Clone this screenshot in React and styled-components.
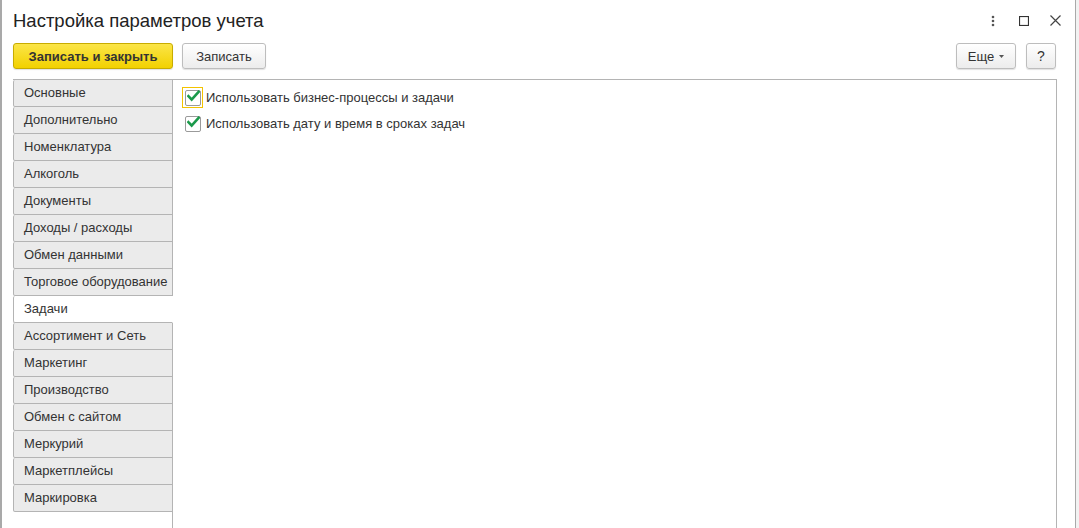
import React, { useState } from "react";
import styled, { createGlobalStyle } from "styled-components";

const GlobalStyle = createGlobalStyle`
  html, body {
    margin: 0;
    padding: 0;
    background: #fff;
  }
  body {
    font-family: Arial, "Liberation Sans", sans-serif;
    color: #333;
  }
`;

const tabs = [
  "Основные",
  "Дополнительно",
  "Номенклатура",
  "Алкоголь",
  "Документы",
  "Доходы / расходы",
  "Обмен данными",
  "Торговое оборудование",
  "Задачи",
  "Ассортимент и Сеть",
  "Маркетинг",
  "Производство",
  "Обмен с сайтом",
  "Меркурий",
  "Маркетплейсы",
  "Маркировка",
];

const App = () => {
  const [active, setActive] = useState("Задачи");
  const [options, setOptions] = useState({ tasks: true, dates: true });

  const toggle = (key) => setOptions((o) => ({ ...o, [key]: !o[key] }));

  return (
    <>
      <GlobalStyle />
      <Screen>
        <Window>
          <Header>
            <Title>Настройка параметров учета</Title>
            <WindowControls>
              <ControlIcon>
                <svg width="4" height="12" viewBox="0 0 4 12">
                  <circle cx="2" cy="2" r="1.3" fill="#555" />
                  <circle cx="2" cy="6" r="1.3" fill="#555" />
                  <circle cx="2" cy="10" r="1.3" fill="#555" />
                </svg>
              </ControlIcon>
              <ControlIcon>
                <svg width="10" height="10" viewBox="0 0 10 10">
                  <rect x="0.5" y="0.5" width="9" height="9" fill="none" stroke="#333" strokeWidth="1.2" />
                </svg>
              </ControlIcon>
              <ControlIcon>
                <svg width="11" height="11" viewBox="0 0 11 11">
                  <path d="M0.5 0.5 L10.5 10.5 M10.5 0.5 L0.5 10.5" stroke="#444" strokeWidth="1.2" />
                </svg>
              </ControlIcon>
            </WindowControls>
          </Header>

          <Toolbar>
            <Button primary>Записать и закрыть</Button>
            <Button>Записать</Button>
            <Spacer />
            <Button more>
              Еще
              <Caret />
            </Button>
            <Button square>?</Button>
          </Toolbar>

          <Body>
            <TabList>
              {tabs.map((t) => (
                <Tab key={t} active={t === active} onClick={() => setActive(t)}>
                  {t}
                </Tab>
              ))}
            </TabList>
            <Panel>
              <CheckRow>
                <CheckFrame focused>
                  <Box onClick={() => toggle("tasks")}>{options.tasks && <Tick />}</Box>
                </CheckFrame>
                <CheckLabel>Использовать бизнес-процессы и задачи</CheckLabel>
              </CheckRow>
              <CheckRow>
                <CheckFrame>
                  <Box onClick={() => toggle("dates")}>{options.dates && <Tick />}</Box>
                </CheckFrame>
                <CheckLabel>Использовать дату и время в сроках задач</CheckLabel>
              </CheckRow>
            </Panel>
          </Body>
        </Window>
        <SideStrip />
      </Screen>
    </>
  );
};

const Tick = () => (
  <svg width="14" height="12" viewBox="0 0 14 12">
    <path d="M1.5 6.2 L5 9.8 L12.5 1.5" fill="none" stroke="#1b9a4b" strokeWidth="2.8" strokeLinecap="square" />
  </svg>
);

const Caret = () => (
  <CaretBox>
    <svg width="5" height="3" viewBox="0 0 5 3">
      <path d="M0 0 L5 0 L2.5 3 Z" fill="#555" />
    </svg>
  </CaretBox>
);

export default App;

const Screen = styled.div`
  display: flex;
  height: 528px;
  overflow: hidden;
`;

const Window = styled.div`
  flex: 0 0 1076px;
  display: flex;
  flex-direction: column;
  border-left: 2px solid #a9a9a9;
  border-right: 1px solid #a9a9a9;
  box-sizing: border-box;
  background: #fff;
`;

const SideStrip = styled.div`
  flex: 1;
  background: #f2f2f2;
`;

const Header = styled.div`
  display: flex;
  align-items: center;
  height: 40px;
  padding: 0 14px 0 11px;
`;

const Title = styled.div`
  flex: 1;
  font-size: 18.5px;
  color: #222;
  padding-top: 2px;
`;

const WindowControls = styled.div`
  display: flex;
  align-items: center;
  gap: 19px;
  padding-top: 1px;
`;

const ControlIcon = styled.div`
  width: 12px;
  height: 12px;
  display: flex;
  align-items: center;
  justify-content: center;
`;

const Toolbar = styled.div`
  display: flex;
  align-items: center;
  gap: 9px;
  height: 26px;
  margin-top: 3px;
  padding: 0 19px 0 11px;
`;

const Spacer = styled.div`
  flex: 1;
`;

const buttonWidth = (p) => {
  if (p.primary) return "160px";
  if (p.square) return "30px";
  if (p.more) return "60px";
  return "84px";
};

const Button = styled.button`
  height: 26px;
  box-sizing: border-box;
  display: flex;
  align-items: center;
  justify-content: center;
  gap: 5px;
  padding: 0;
  margin-left: ${(p) => (p.square ? "1px" : "0")};
  width: ${buttonWidth};
  font-family: Arial, "Liberation Sans", sans-serif;
  font-size: ${(p) => (p.square ? "14px" : "13px")};
  font-weight: ${(p) => (p.primary ? "bold" : "normal")};
  color: #333;
  border-radius: 3px;
  border: 1px solid ${(p) => (p.primary ? "#c8ac00" : "#bdbdbd")};
  background: ${(p) =>
    p.primary
      ? "linear-gradient(#fbe548, #f2d100)"
      : "linear-gradient(#ffffff, #ececec)"};
  box-shadow: 0 1px 1px rgba(0, 0, 0, 0.12);
  cursor: pointer;
`;

const CaretBox = styled.span`
  display: flex;
  align-items: center;
  padding-top: 1px;
`;

const Body = styled.div`
  flex: 1;
  display: flex;
  margin-top: 10px;
  padding-left: 11px;
  padding-right: 18px;
  min-height: 0;
`;

const TabList = styled.div`
  flex: 0 0 160px;
  display: flex;
  flex-direction: column;
  border-top: 1px solid #b4b4b4;
  position: relative;
  z-index: 1;
  margin-right: -1px;
`;

const Tab = styled.div`
  height: 26px;
  line-height: 26px;
  padding-left: 10px;
  font-size: 13px;
  color: #333;
  white-space: nowrap;
  background: ${(p) => (p.active ? "#fff" : "#ebebeb")};
  border-left: 1px solid #b4b4b4;
  border-bottom: 1px solid #b4b4b4;
  border-right: 1px solid ${(p) => (p.active ? "#fff" : "#b4b4b4")};
  border-bottom-left-radius: 2px;
  border-top-left-radius: 2px;
  cursor: pointer;
`;

const Panel = styled.div`
  flex: 1;
  border: 1px solid #b4b4b4;
  border-bottom: none;
  padding: 7px 9px;
  display: flex;
  flex-direction: column;
  gap: 5px;
`;

const CheckRow = styled.div`
  display: flex;
  align-items: center;
  height: 21px;
`;

const CheckFrame = styled.div`
  width: 21px;
  height: 21px;
  box-sizing: border-box;
  border: 1px solid ${(p) => (p.focused ? "#f3c300" : "transparent")};
  display: flex;
  align-items: center;
  justify-content: center;
  margin-right: 3px;
`;

const Box = styled.div`
  width: 14px;
  height: 14px;
  border: 1px solid #9a9a9a;
  border-radius: 2px;
  background: #fff;
  display: flex;
  align-items: flex-start;
  justify-content: center;
  overflow: visible;
  cursor: pointer;

  svg {
    margin-top: -1px;
    margin-left: 1px;
  }
`;

const CheckLabel = styled.span`
  font-size: 13px;
  color: #333;
`;
